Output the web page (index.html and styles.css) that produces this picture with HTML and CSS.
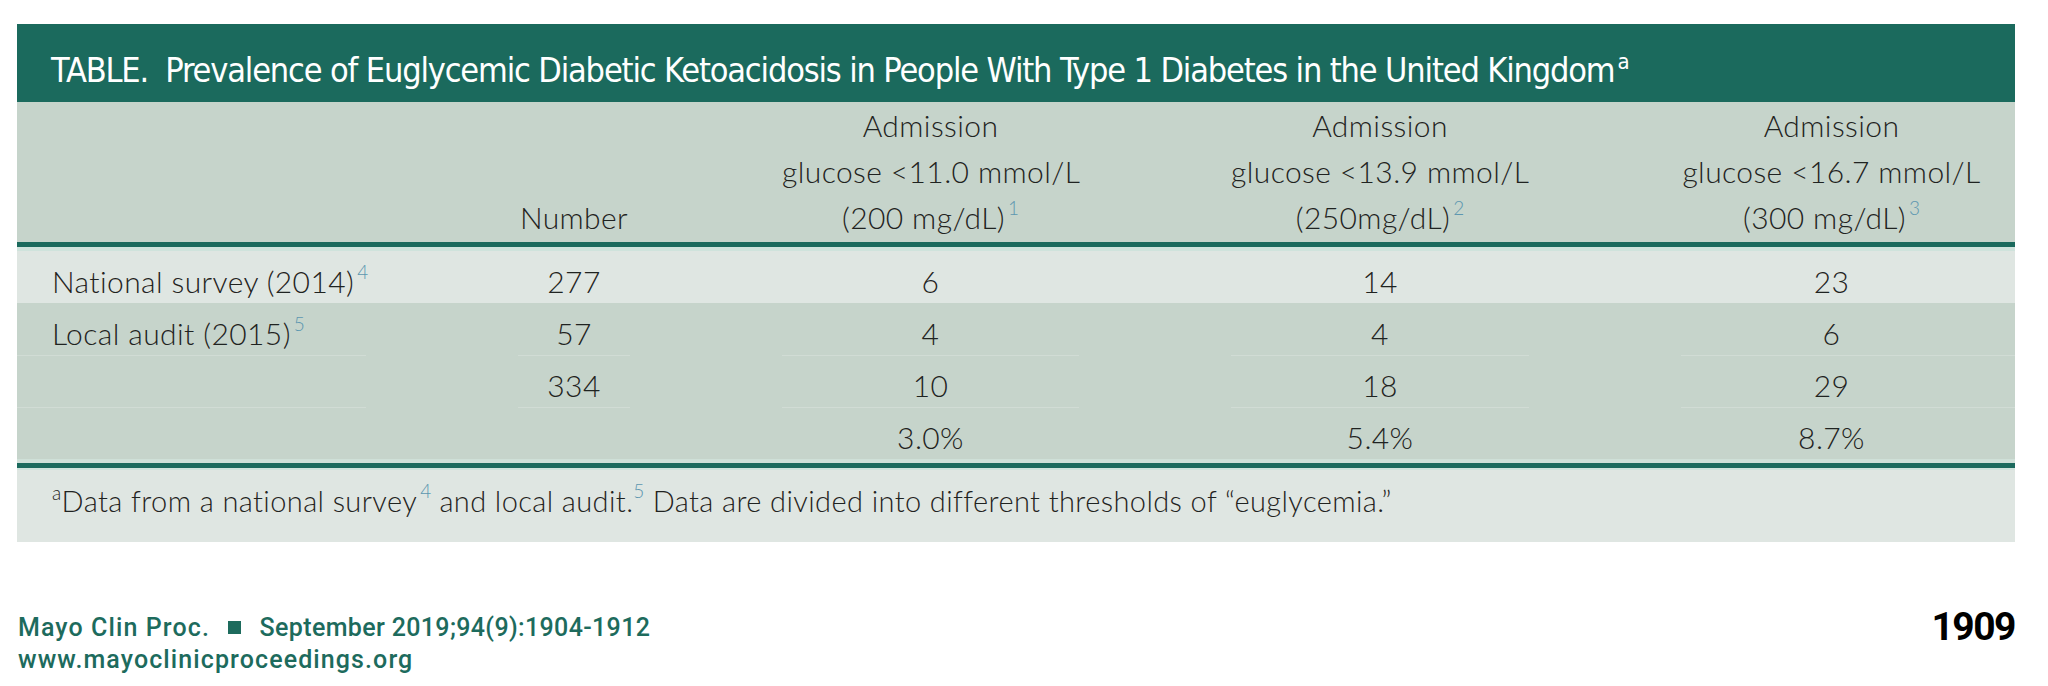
FILE: index.html
```html
<!DOCTYPE html>
<html lang="en">
<head>
<meta charset="utf-8">
<title>TABLE. Prevalence of Euglycemic Diabetic Ketoacidosis</title>
<link rel="stylesheet" href="styles.css">
</head>
<body>
<div class="page">
  <section class="tbl">
    <h1 class="tbl-title">TABLE.&nbsp; Prevalence of Euglycemic Diabetic Ketoacidosis in People With Type 1 Diabetes in the United Kingdom<sup class="title-sup">a</sup></h1>
    <div class="row head">
      <div class="cell label"></div>
      <div class="cell">Number</div>
      <div class="cell">Admission<br>glucose &lt;11.0 mmol/L<br>(200 mg/dL)<sup class="ref">1</sup></div>
      <div class="cell">Admission<br>glucose &lt;13.9 mmol/L<br>(250mg/dL)<sup class="ref">2</sup></div>
      <div class="cell last">Admission<br>glucose &lt;16.7 mmol/L<br>(300 mg/dL)<sup class="ref">3</sup></div>
    </div>
    <div class="rule rule-top"></div>
    <div class="row body light">
      <div class="cell label">National survey (2014)<sup class="ref">4</sup></div>
      <div class="cell">277</div>
      <div class="cell">6</div>
      <div class="cell">14</div>
      <div class="cell last">23</div>
    </div>
    <div class="row body">
      <div class="cell label">Local audit (2015)<sup class="ref">5</sup></div>
      <div class="cell">57</div>
      <div class="cell">4</div>
      <div class="cell">4</div>
      <div class="cell last">6</div>
    </div>
    <div class="row body sep">
      <div class="cell label"></div>
      <div class="cell">334</div>
      <div class="cell">10</div>
      <div class="cell">18</div>
      <div class="cell last">29</div>
    </div>
    <div class="row body sep">
      <div class="cell label"></div>
      <div class="cell"></div>
      <div class="cell">3.0%</div>
      <div class="cell">5.4%</div>
      <div class="cell last">8.7%</div>
    </div>
    <div class="rule rule-bottom"></div>
    <p class="footnote"><sup class="fn-mark">a</sup>Data from a national survey<sup class="ref">4</sup> and local audit.<sup class="ref tight">5</sup> Data are divided into different thresholds of “euglycemia.”</p>
  </section>
  <footer class="page-footer">
    <div class="journal">
      <div class="journal-line">Mayo Clin Proc. <span class="square"></span> <span class="issue">September 2019;94(9):1904-1912</span></div>
      <div class="journal-line">www.mayoclinicproceedings.org</div>
    </div>
    <div class="page-number">1909</div>
  </footer>
</div>
</body>
</html>
```

FILE: styles.css
```css
* { box-sizing: border-box; }

html, body {
  margin: 0;
  padding: 0;
  background: #ffffff;
}

.page {
  width: 2048px;
  padding: 24px 0 0 17px;
}

.tbl {
  width: 1998px;
  font-family: "Lato", "Open Sans", sans-serif;
  font-weight: 300;
  font-size: 30px;
  letter-spacing: 0.4px;
  color: #1f2321;
}

.tbl-title {
  margin: 0;
  height: 78px;
  padding: 29px 0 0 34px;
  background: #1b6a5d;
  color: #ffffff;
  font-family: "DejaVu Sans Condensed", "DejaVu Sans", sans-serif;
  font-weight: 400;
  font-size: 34px;
  line-height: 34px;
  letter-spacing: -1.15px;
  white-space: nowrap;
}

.title-sup {
  font-size: 22px;
  line-height: 0;
  vertical-align: 13px;
  margin-left: 3px;
}

.row {
  display: grid;
  grid-template-columns: 349px 112px 297px 298px 334px;
  column-gap: 152px;
  line-height: 46px;
}

.cell {
  text-align: center;
  white-space: nowrap;
}

.cell.label {
  text-align: left;
  padding-left: 35px;
}

.cell.last {
  padding-right: 33px;
}

.head {
  background: #c6d4cb;
  padding-bottom: 2px;
  align-items: end;
}

.body {
  background: #c6d4cb;
  height: 52px;
}

.body .cell {
  padding-top: 7px;
}

.body.light {
  background: #dfe6e2;
}

.body.sep .cell {
  border-top: 1px solid #d1dcd5;
  padding-top: 6px;
}

.rule {
  height: 9px;
}

.rule-top {
  background: linear-gradient(to bottom, #1b6a5d 0, #1b6a5d 5px, #cfe3dc 5px, #cfe3dc 9px);
}

.rule-bottom {
  height: 11px;
  background: linear-gradient(to bottom, #cfe0d8 0, #cfe0d8 4px, #1b6a5d 4px, #1b6a5d 9px, #cfe3dc 9px, #cfe3dc 11px);
}

.ref {
  color: #5d97b0;
  font-size: 19px;
  letter-spacing: 0;
  line-height: 0;
  vertical-align: 14px;
  margin-left: 3px;
}

.ref.tight {
  margin-left: 0;
}

.footnote {
  margin: 0;
  background: #dfe6e2;
  height: 72px;
  padding: 8px 0 0 35px;
  font-size: 29px;
  letter-spacing: 0.4px;
  line-height: 46px;
  white-space: nowrap;
}

.fn-mark {
  font-size: 19px;
  line-height: 0;
  vertical-align: 12px;
}

.page-footer {
  width: 1998px;
  margin-top: 70px;
  display: flex;
  justify-content: space-between;
  align-items: flex-start;
}

.journal {
  padding-left: 1px;
  font-family: "Roboto", sans-serif;
  font-weight: 500;
  font-size: 25px;
  line-height: 32px;
  letter-spacing: 1.1px;
  color: #1d6b5d;
}

.issue {
  letter-spacing: 0.35px;
}

.square {
  display: inline-block;
  width: 13px;
  height: 13px;
  background: #1d6b5d;
  margin: 0 11px;
  vertical-align: 2px;
}

.page-number {
  margin-top: -5px;
  padding-right: 0;
  font-family: "Roboto", sans-serif;
  font-weight: 700;
  font-size: 39px;
  line-height: 40px;
  letter-spacing: -1.5px;
  color: #000000;
}
```
